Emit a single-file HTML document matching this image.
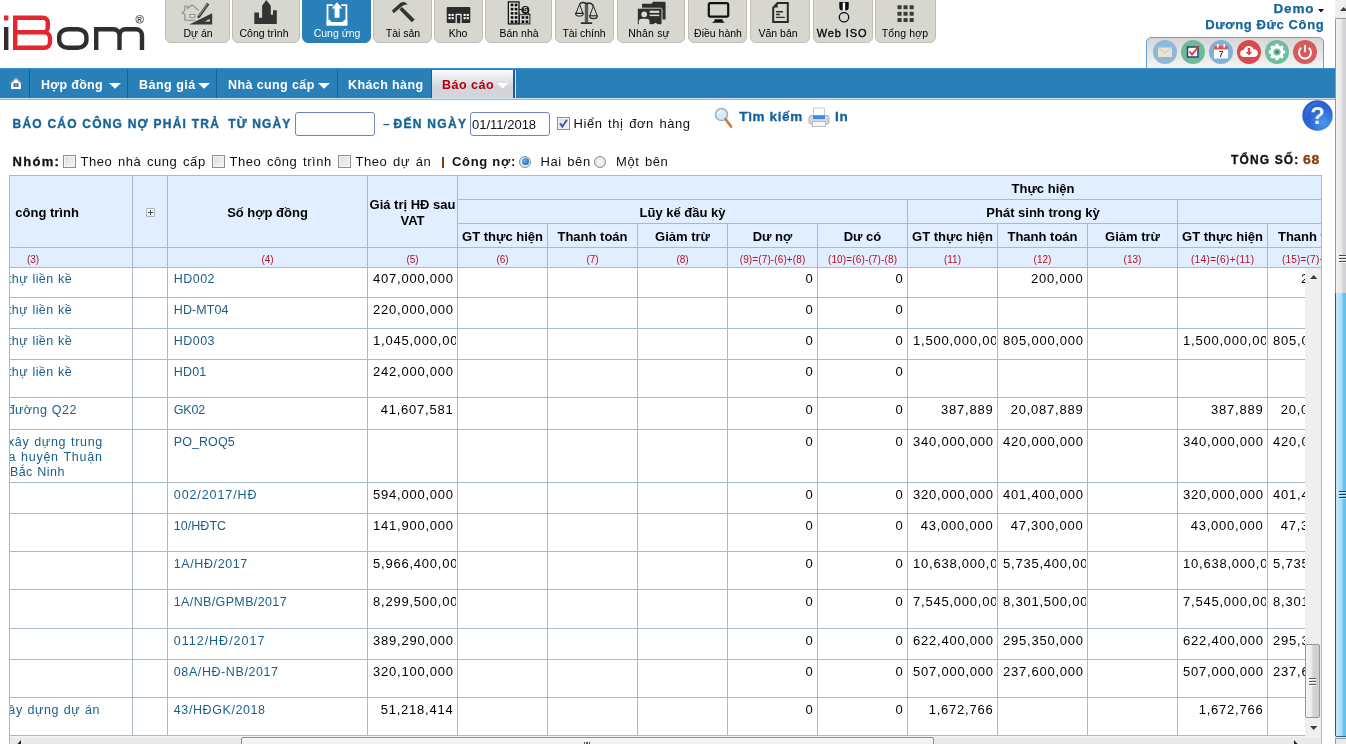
<!DOCTYPE html><html><head><meta charset="utf-8"><title>iBom</title>
<style>html,body{margin:0;padding:0}body{width:1346px;height:744px;overflow:hidden;position:relative;background:#fff;font-family:"Liberation Sans", sans-serif;}div{box-sizing:border-box}svg{position:absolute;overflow:visible}</style></head><body><div id="w" style="position:absolute;left:0;top:0;width:1346px;height:744px;overflow:hidden;will-change:transform;">
<svg style="left:0;top:0" width="160" height="60" viewBox="0 0 160 60">
<rect x="4" y="15.5" width="4.4" height="5" fill="#e5262e"/>
<rect x="4" y="27" width="4.4" height="23" fill="#2f2f31"/>
<path d="M15.2,47.8 V17.7 H43 a4.8,4.8 0 0 1 4.8,4.8 V27.5 a4.8,4.8 0 0 1 -4.8,4.8 H15.2 M43,32.3 H44.2 a5.8,5.8 0 0 1 5.8,5.8 V42 a5.8,5.8 0 0 1 -5.8,5.8 H13" fill="none" stroke="#e5262e" stroke-width="4.4"/>
<rect x="59.2" y="29.2" width="27.2" height="18.6" rx="8.6" ry="7.6" fill="none" stroke="#2f2f31" stroke-width="4.4"/>
<path d="M96.2,50 V27 M96.2,29.2 H113.5 a6,6 0 0 1 6,6 V50 M119.5,35.2 a6,6 0 0 1 6,-6 H136 a6,6 0 0 1 6,6 V50" fill="none" stroke="#2f2f31" stroke-width="4.4"/>
<circle cx="139.7" cy="19.3" r="3.9" fill="none" stroke="#555" stroke-width="0.9"/>
<text x="139.7" y="21.6" font-family="Liberation Sans, sans-serif" font-size="6.5" font-weight="700" fill="#555" text-anchor="middle">R</text>
</svg>
<div style="position:absolute;left:165px;top:-2px;width:65.4px;height:44.6px;background:#d7d6cf;border:1px solid #bfbdb6;border-radius:0 0 6px 6px;"></div>
<div style="position:absolute;top:28.41px;font-size:10.5px;line-height:10.5px;font-weight:400;color:#000;white-space:nowrap;left:-102.0px;width:600px;text-align:center;">Dự án</div>
<svg style="left:182.5px;top:0px" width="30" height="28" viewBox="0 0 30 28"><path d="M1.8,14.2 L-0.9,12.9 L1.8,10.5 V6.2 H4.7 V8.3 L9.1,4.9 L15.6,10.5 M1.8,14 V20.3 H12.5" fill="none" stroke="#8c8c88" stroke-width="1.1"/><rect x="6.9" y="14.5" width="5" height="2.8" fill="#ecebe6" stroke="#8a8a86" stroke-width="1"/><path d="M25.2,3.6 L15.6,17" stroke="#3a3a38" stroke-width="2.8"/><path d="M24.3,4.2 L15.8,16.1" stroke="#e8e6e0" stroke-width="0.6"/><path d="M14.6,18.5 L14.8,15.8 L16.9,17.3 Z" fill="#3a3a38"/><path d="M6.2,24.6 H29.2 V13.2 Z" fill="#3a3a38"/><path d="M21.6,21.6 H26.8 V19 Z" fill="#e0deda"/></svg>
<div style="position:absolute;left:232px;top:-2px;width:68.4px;height:44.6px;background:#d7d6cf;border:1px solid #bfbdb6;border-radius:0 0 6px 6px;"></div>
<div style="position:absolute;top:28.41px;font-size:10.5px;line-height:10.5px;font-weight:400;color:#000;white-space:nowrap;left:-36.0px;width:600px;text-align:center;">Công trình</div>
<svg style="left:251.0px;top:0px" width="30" height="28" viewBox="0 0 30 28"><path d="M3.3,24.1 V12.5 H8 V17.8 H11.1 V5.8 L15.3,0 L19.8,5.8 V14.7 H22 V10.3 H25.8 V24.1 Z" fill="#343432"/></svg>
<div style="position:absolute;left:302px;top:-2px;width:69.4px;height:44.6px;background:#2980b9;border:1px solid #2980b9;border-radius:0 0 6px 6px;"></div>
<div style="position:absolute;top:28.41px;font-size:10.5px;line-height:10.5px;font-weight:400;color:#fff;white-space:nowrap;left:37.0px;width:600px;text-align:center;">Cung ứng</div>
<svg style="left:321.5px;top:0px" width="30" height="28" viewBox="0 0 30 28"><path d="M10.8,5.1 H5.5 V24.5 H24.4 V5.1 H19.2" fill="none" stroke="#fff" stroke-width="1.8"/><path d="M4.6,25.6 H25.3 V19.7 H22.6 L20.4,22.1 H9.6 L7.4,19.7 H4.6 Z" fill="#fff"/><path d="M15,2.2 L20.4,8.6 H17.5 V17.8 H12.6 V8.6 H9.7 Z" fill="#fff"/></svg>
<div style="position:absolute;left:373px;top:-2px;width:59.4px;height:44.6px;background:#d7d6cf;border:1px solid #bfbdb6;border-radius:0 0 6px 6px;"></div>
<div style="position:absolute;top:28.41px;font-size:10.5px;line-height:10.5px;font-weight:400;color:#000;white-space:nowrap;left:103.0px;width:600px;text-align:center;">Tài sản</div>
<svg style="left:387.5px;top:0px" width="30" height="28" viewBox="0 0 30 28"><path d="M11.4,9.4 L14,7.1 L26.7,19.6 L23.8,22.3 Z" fill="#343432"/><path d="M3.8,10.7 L5.6,8.9 L12.2,3.1 Q14,1.8 15.8,2 Q18,2.4 19.6,4.5 Q17.5,4.3 16.2,4.9 Q14.8,5.5 14,6.3 L7.8,11.6 L6,13.2 Z" fill="#343432"/></svg>
<div style="position:absolute;left:434px;top:-2px;width:49.4px;height:44.6px;background:#d7d6cf;border:1px solid #bfbdb6;border-radius:0 0 6px 6px;"></div>
<div style="position:absolute;top:28.41px;font-size:10.5px;line-height:10.5px;font-weight:400;color:#000;white-space:nowrap;left:158.0px;width:600px;text-align:center;">Kho</div>
<svg style="left:443.5px;top:0px" width="30" height="28" viewBox="0 0 30 28"><rect x="2.7" y="6.9" width="23.6" height="16.1" rx="1" fill="#2c2c2a"/><rect x="4.5" y="13.9" width="2.1" height="2.1" fill="#fff"/><rect x="4.5" y="17.1" width="2.1" height="2.1" fill="#fff"/><rect x="7.6" y="13.9" width="2.1" height="2.1" fill="#fff"/><rect x="7.6" y="17.1" width="2.1" height="2.1" fill="#fff"/><rect x="19.6" y="13.9" width="2.1" height="2.1" fill="#fff"/><rect x="19.6" y="17.1" width="2.1" height="2.1" fill="#fff"/><rect x="22.7" y="13.9" width="2.1" height="2.1" fill="#fff"/><rect x="22.7" y="17.1" width="2.1" height="2.1" fill="#fff"/><rect x="11.6" y="13.8" width="6" height="9.4" fill="#f4f4f0"/><rect x="12.8" y="15.1" width="3.6" height="8.1" fill="#2c2c2a"/></svg>
<div style="position:absolute;left:485px;top:-2px;width:67.4px;height:44.6px;background:#d7d6cf;border:1px solid #bfbdb6;border-radius:0 0 6px 6px;"></div>
<div style="position:absolute;top:28.41px;font-size:10.5px;line-height:10.5px;font-weight:400;color:#000;white-space:nowrap;left:219.0px;width:600px;text-align:center;">Bán nhà</div>
<svg style="left:503.5px;top:0px" width="30" height="28" viewBox="0 0 30 28"><rect x="4.4" y="1.9" width="10.6" height="22" fill="#e4e3de" stroke="#111" stroke-width="1.3"/><rect x="6.7" y="3.6" width="2.7" height="2.7" fill="#111"/><rect x="6.7" y="7.8" width="2.7" height="2.7" fill="#111"/><rect x="6.7" y="12" width="2.7" height="2.7" fill="#111"/><rect x="6.7" y="16.1" width="2.7" height="2.7" fill="#111"/><rect x="6.7" y="20.3" width="2.7" height="2.7" fill="#111"/><rect x="10.7" y="3.6" width="2.7" height="2.7" fill="#111"/><rect x="10.7" y="7.8" width="2.7" height="2.7" fill="#111"/><rect x="10.7" y="12" width="2.7" height="2.7" fill="#111"/><rect x="10.7" y="16.1" width="2.7" height="2.7" fill="#111"/><rect x="10.7" y="20.3" width="2.7" height="2.7" fill="#111"/><rect x="15.6" y="14.7" width="10.3" height="9.2" fill="#e4e3de" stroke="#111" stroke-width="0.9"/><rect x="17.6" y="16.1" width="2.7" height="2.7" fill="#111"/><rect x="17.6" y="20.3" width="2.7" height="2.7" fill="#111"/><rect x="21.6" y="16.1" width="2.7" height="2.7" fill="#111"/><rect x="21.6" y="20.3" width="2.7" height="2.7" fill="#111"/><path d="M15,9.5 H18" stroke="#111" stroke-width="0.9"/><circle cx="21.4" cy="10" r="3.9" fill="#111"/><text x="21.4" y="12.4" font-size="6.6" font-weight="700" text-anchor="middle" fill="#d8d6d0" font-family="Liberation Sans, sans-serif">S</text><path d="M24,13 L26.3,14.7" stroke="#111" stroke-width="1"/></svg>
<div style="position:absolute;left:555px;top:-2px;width:59.4px;height:44.6px;background:#d7d6cf;border:1px solid #bfbdb6;border-radius:0 0 6px 6px;"></div>
<div style="position:absolute;top:28.41px;font-size:10.5px;line-height:10.5px;font-weight:400;color:#000;white-space:nowrap;left:284.0px;width:600px;text-align:center;">Tài chính</div>
<svg style="left:569.5px;top:0px" width="30" height="28" viewBox="0 0 30 28"><rect x="14.8" y="3.1" width="3.4" height="19.3" fill="#5a5a58"/><rect x="10.7" y="22.2" width="11.6" height="1.8" rx="0.8" fill="#2a2a28"/><path d="M9.6,4.2 Q12,1.2 16.4,3.6 Q20.5,1.8 23.4,5.8" fill="none" stroke="#222" stroke-width="1.5"/><path d="M5.9,13.4 L9.6,4.2 L12.9,13.4 M19.8,15.8 L23.4,5.8 L27.2,15.8" fill="none" stroke="#222" stroke-width="1"/><path d="M5.6,13.4 H13.2 A3.8,2.6 0 0 1 5.6,13.4 Z" fill="#e6e5e0" stroke="#222" stroke-width="1.1"/><path d="M19.6,15.8 H27.4 A3.9,3 0 0 1 19.6,15.8 Z" fill="#b8b8b4" stroke="#222" stroke-width="1.1"/></svg>
<div style="position:absolute;left:617px;top:-2px;width:68.4px;height:44.6px;background:#d7d6cf;border:1px solid #bfbdb6;border-radius:0 0 6px 6px;"></div>
<div style="position:absolute;top:28.41px;font-size:10.5px;line-height:10.5px;font-weight:400;color:#000;white-space:nowrap;letter-spacing:0.2px;left:349.0px;width:600px;text-align:center;">Nhân sự</div>
<svg style="left:636.0px;top:0px" width="30" height="28" viewBox="0 0 30 28"><path d="M6,19.6 V4.6 a0.8,0.8 0 0 1 0.8,-0.8 H15.8 L17,1.8 H28.4 a1.2,1.2 0 0 1 1.2,1.2 V19.6 Z" fill="#2e2e2c"/><rect x="1.3" y="8.2" width="24.7" height="16.5" rx="1.4" fill="#2e2e2c" stroke="#dedcd6" stroke-width="0.9"/><circle cx="8.2" cy="14.3" r="2.9" fill="#dcdad4"/><path d="M2.8,25.2 V21.2 Q2.8,18.7 6,18.7 H10.5 Q13.5,18.7 13.5,21.2 V25.2 Z" fill="#dcdad4"/><rect x="13.6" y="10.7" width="9.6" height="2.2" fill="#dcdad4"/><rect x="13.6" y="14.6" width="9.6" height="1.5" fill="#dcdad4"/><path d="M17.8,25.3 V23.8 L19.5,22.8 L21.2,23.8 V25.3 Z" fill="#d9d7d0"/></svg>
<div style="position:absolute;left:688px;top:-2px;width:59.4px;height:44.6px;background:#d7d6cf;border:1px solid #bfbdb6;border-radius:0 0 6px 6px;"></div>
<div style="position:absolute;top:28.41px;font-size:10.5px;line-height:10.5px;font-weight:400;color:#000;white-space:nowrap;left:418.0px;width:600px;text-align:center;">Điều hành</div>
<svg style="left:702.5px;top:0px" width="30" height="28" viewBox="0 0 30 28"><rect x="5.8" y="3.1" width="19.4" height="13.6" rx="1.6" fill="none" stroke="#111" stroke-width="2.2"/><path d="M11.8,19.2 H19.4 L20,21.2 L22.1,22.7 H8.7 L11.2,21.2 Z" fill="#111"/></svg>
<div style="position:absolute;left:750px;top:-2px;width:60.4px;height:44.6px;background:#d7d6cf;border:1px solid #bfbdb6;border-radius:0 0 6px 6px;"></div>
<div style="position:absolute;top:28.41px;font-size:10.5px;line-height:10.5px;font-weight:400;color:#000;white-space:nowrap;left:478.0px;width:600px;text-align:center;">Văn bản</div>
<svg style="left:765.0px;top:0px" width="30" height="28" viewBox="0 0 30 28"><path d="M8.2,7.6 L12.6,3 H22.8 V22 H8.2 Z" fill="none" stroke="#2a2a28" stroke-width="2"/><path d="M8.2,7.6 H12.6 V3 Z" fill="#2a2a28"/><path d="M11.1,11.8 H18 M11.1,14.5 H14.9 M11.1,17.4 H19.8" stroke="#2a2a28" stroke-width="1.4"/></svg>
<div style="position:absolute;left:813px;top:-2px;width:60.4px;height:44.6px;background:#d7d6cf;border:1px solid #bfbdb6;border-radius:0 0 6px 6px;"></div>
<div style="position:absolute;top:27.99px;font-size:11px;line-height:11px;font-weight:400;color:#000;white-space:nowrap;letter-spacing:0.9px;left:542.0px;width:600px;text-align:center;-webkit-text-stroke:0.35px #111;">Web ISO</div>
<svg style="left:828.0px;top:0px" width="30" height="28" viewBox="0 0 30 28"><path d="M11.3,2 H20.7 V7.2 Q20.7,10.4 17.6,10.4 H14.4 Q11.3,10.4 11.3,7.2 Z" fill="#0c0c0c"/><rect x="14.7" y="2.6" width="2.4" height="7.8" fill="#fff"/><rect x="13.6" y="2.6" width="1.1" height="6" fill="#1a4a7a" opacity="0.8"/><rect x="17.1" y="2.6" width="1.1" height="6" fill="#6a1a1a" opacity="0.8"/><rect x="14.4" y="10.4" width="3.2" height="2" fill="#f0efea"/><circle cx="16" cy="17.2" r="4.7" fill="none" stroke="#111" stroke-width="1.3"/></svg>
<div style="position:absolute;left:875px;top:-2px;width:61.4px;height:44.6px;background:#d7d6cf;border:1px solid #bfbdb6;border-radius:0 0 6px 6px;"></div>
<div style="position:absolute;top:28.41px;font-size:10.5px;line-height:10.5px;font-weight:400;color:#000;white-space:nowrap;letter-spacing:0.15px;left:605.0px;width:600px;text-align:center;">Tổng hợp</div>
<svg style="left:890.5px;top:0px" width="30" height="28" viewBox="0 0 30 28"><rect x="6.5" y="5.3" width="4.1" height="3.9" fill="#3a3a38"/><rect x="6.5" y="11.8" width="4.1" height="3.9" fill="#3a3a38"/><rect x="6.5" y="18.1" width="4.1" height="3.9" fill="#3a3a38"/><rect x="12.5" y="5.3" width="4.1" height="3.9" fill="#3a3a38"/><rect x="12.5" y="11.8" width="4.1" height="3.9" fill="#3a3a38"/><rect x="12.5" y="18.1" width="4.1" height="3.9" fill="#3a3a38"/><rect x="18.6" y="5.3" width="4.1" height="3.9" fill="#3a3a38"/><rect x="18.6" y="11.8" width="4.1" height="3.9" fill="#3a3a38"/><rect x="18.6" y="18.1" width="4.1" height="3.9" fill="#3a3a38"/></svg>
<div style="position:absolute;top:1.87px;font-size:13.5px;line-height:13.5px;font-weight:700;color:#17659a;white-space:nowrap;letter-spacing:0.9px;right:31.5px;text-align:right;-webkit-text-stroke:0.25px #17659a;">Demo</div>
<svg style="left:1318px;top:9px" width="6" height="4" viewBox="0 0 6 4"><path d="M0,0 H6 L3,3.5 Z" fill="#0a0a40"/></svg>
<div style="position:absolute;top:18.30px;font-size:13px;line-height:13px;font-weight:700;color:#17659a;white-space:nowrap;letter-spacing:0.62px;right:21.700000000000045px;text-align:right;-webkit-text-stroke:0.25px #17659a;">Dương Đức Công</div>
<div style="position:absolute;left:1146px;top:37px;width:178px;height:34px;border:1px solid #5fa3d6;border-radius:5px 5px 0 0;background:linear-gradient(#d6d6d6,#f6f6f6);"></div>
<svg style="left:1153px;top:40px" width="24" height="24" viewBox="0 0 24 24"><circle cx="12" cy="12" r="12" fill="#8fb8d8"/><rect x="5" y="7.5" width="14" height="9.5" fill="#e8e4d8"/><path d="M5,7.5 L12,13 L19,7.5" fill="none" stroke="#c9c4b4" stroke-width="1"/></svg>
<svg style="left:1181px;top:40px" width="24" height="24" viewBox="0 0 24 24"><circle cx="12" cy="12" r="12" fill="#6fb99a"/><rect x="6.5" y="7" width="10.5" height="10" fill="#fff" stroke="#3a4a6a" stroke-width="1.6"/><path d="M8.5,11.5 L11,14.5 L18,6" fill="none" stroke="#d43a3a" stroke-width="1.8"/></svg>
<svg style="left:1209px;top:40px" width="24" height="24" viewBox="0 0 24 24"><circle cx="12" cy="12" r="12" fill="#7fb2da"/><rect x="5" y="6" width="14" height="12.5" fill="#fff"/><rect x="5" y="6" width="14" height="3.5" fill="#e05a55"/><text x="12" y="17.3" font-size="8.5" font-weight="700" text-anchor="middle" fill="#3a3a5a" font-family="Liberation Sans, sans-serif">7</text><rect x="8" y="4" width="1.5" height="3.5" fill="#fff"/><rect x="14.5" y="4" width="1.5" height="3.5" fill="#fff"/></svg>
<svg style="left:1237px;top:40px" width="24" height="24" viewBox="0 0 24 24"><circle cx="12" cy="12" r="12" fill="#d9484c"/><path d="M6.5,17 a3.5,3.5 0 0 1 0.3,-7 a5,5 0 0 1 9.6,-0.8 a3.9,3.9 0 0 1 1,7.8 Z" fill="#fff"/><path d="M10.8,8 h2.4 v4 h2.2 l-3.4,3.6 l-3.4,-3.6 h2.2 Z" fill="#d9484c"/></svg>
<svg style="left:1265px;top:40px" width="24" height="24" viewBox="0 0 24 24"><circle cx="12" cy="12" r="12" fill="#6fbd9f"/><circle cx="12" cy="12" r="5.2" fill="none" stroke="#fff" stroke-width="3.2"/><g stroke="#fff" stroke-width="3"><path d="M12,3.8 V6.5 M12,17.5 V20.2 M3.8,12 H6.5 M17.5,12 H20.2 M6.2,6.2 L8.1,8.1 M15.9,15.9 L17.8,17.8 M6.2,17.8 L8.1,15.9 M15.9,8.1 L17.8,6.2"/></g><circle cx="12" cy="12" r="1.6" fill="#3c7a66"/></svg>
<svg style="left:1293px;top:40px" width="24" height="24" viewBox="0 0 24 24"><circle cx="12" cy="12" r="12" fill="#d65a5e"/><path d="M8.3,7.8 a6,6 0 1 0 7.4,0" fill="none" stroke="#fff" stroke-width="1.9"/><path d="M12,5 V12.2" stroke="#fff" stroke-width="2.1"/></svg>
<div style="position:absolute;left:0px;top:68px;width:1335px;height:30px;background:#2980b9;border-top:1px solid #3a8fd0;"></div>
<div style="position:absolute;left:0px;top:98px;width:1335px;height:1px;background:#cfe0ee;"></div>
<div style="position:absolute;left:0px;top:99px;width:1335px;height:1px;background:#b0b0b0;"></div>
<div style="position:absolute;left:29px;top:69px;width:1px;height:29px;background:#1c5f95;"></div>
<div style="position:absolute;left:127px;top:69px;width:1px;height:29px;background:#1c5f95;"></div>
<div style="position:absolute;left:216px;top:69px;width:1px;height:29px;background:#1c5f95;"></div>
<div style="position:absolute;left:337px;top:69px;width:1px;height:29px;background:#1c5f95;"></div>
<svg style="left:8px;top:75px" width="16" height="16" viewBox="0 0 16 16">
<path d="M8,1.5 L1.5,8.2 L2.8,9.2 L8,3.8 L13.2,9.2 L14.5,8.2 Z" fill="#8a8f98"/>
<path d="M8,3.8 L3,9 V14 H13 V9 Z" fill="#fff"/>
<rect x="5.5" y="8.2" width="5" height="3.6" fill="#2a62c8"/><rect x="7" y="9" width="2" height="1.6" fill="#7ab4ff"/>
</svg>
<div style="position:absolute;top:78.72px;font-size:12.5px;line-height:12.5px;font-weight:700;color:#fff;white-space:nowrap;letter-spacing:0.3px;left:41px;">Hợp đồng</div>
<svg style="left:109.3px;top:83.3px" width="12" height="6" viewBox="0 0 12 6"><path d="M0,0 H12 L6,5.8 Z" fill="#fff"/></svg>
<div style="position:absolute;top:78.72px;font-size:12.5px;line-height:12.5px;font-weight:700;color:#fff;white-space:nowrap;letter-spacing:0.5px;left:139px;">Bảng giá</div>
<svg style="left:198.4px;top:83.3px" width="12" height="6" viewBox="0 0 12 6"><path d="M0,0 H12 L6,5.8 Z" fill="#fff"/></svg>
<div style="position:absolute;top:78.72px;font-size:12.5px;line-height:12.5px;font-weight:700;color:#fff;white-space:nowrap;letter-spacing:0.4px;left:228px;">Nhà cung cấp</div>
<svg style="left:318px;top:83.3px" width="12" height="6" viewBox="0 0 12 6"><path d="M0,0 H12 L6,5.8 Z" fill="#fff"/></svg>
<div style="position:absolute;top:78.72px;font-size:12.5px;line-height:12.5px;font-weight:700;color:#fff;white-space:nowrap;letter-spacing:0.4px;left:348px;">Khách hàng</div>
<div style="position:absolute;left:430.5px;top:70px;width:1.5px;height:28px;background:#1c5f95;"></div>
<div style="position:absolute;left:432px;top:70px;width:81px;height:28px;background:linear-gradient(#ffffff,#e4e5ea 35%,#d3d5db 60%,#d3d5db);"></div>
<div style="position:absolute;left:513px;top:70px;width:1.6px;height:28px;background:#1c5f95;"></div>
<div style="position:absolute;left:515px;top:70px;width:1px;height:28px;background:#d4e6f5;"></div>
<div style="position:absolute;top:78.72px;font-size:12.5px;line-height:12.5px;font-weight:700;color:#b4000e;white-space:nowrap;letter-spacing:0.5px;left:442px;">Báo cáo</div>
<svg style="left:496.5px;top:83.3px" width="11.4" height="6" viewBox="0 0 11.4 6"><path d="M0,0 H11.4 L5.7,5.6 Z" fill="#fff"/></svg>
<div style="position:absolute;top:118.14px;font-size:12px;line-height:12px;font-weight:700;color:#14649a;white-space:nowrap;letter-spacing:1.22px;left:12.5px;-webkit-text-stroke:0.35px #14649a;">BÁO CÁO CÔNG NỢ PHẢI TRẢ</div>
<div style="position:absolute;top:118.14px;font-size:12px;line-height:12px;font-weight:700;color:#14649a;white-space:nowrap;letter-spacing:1.1px;left:228.3px;-webkit-text-stroke:0.35px #14649a;">TỪ NGÀY</div>
<div style="position:absolute;left:295px;top:112px;width:80px;height:24px;border:1px solid #6b87b5;border-radius:3px;background:#fff;"></div>
<div style="position:absolute;top:118.14px;font-size:12px;line-height:12px;font-weight:700;color:#14649a;white-space:nowrap;left:383px;">–</div>
<div style="position:absolute;top:118.14px;font-size:12px;line-height:12px;font-weight:700;color:#14649a;white-space:nowrap;letter-spacing:1.3px;left:393.5px;-webkit-text-stroke:0.35px #14649a;">ĐẾN NGÀY</div>
<div style="position:absolute;left:470px;top:112px;width:80px;height:24px;border:1px solid #6b87b5;border-radius:3px;background:#fff;"></div>
<div style="position:absolute;top:118.30px;font-size:13px;line-height:13px;font-weight:400;color:#111;white-space:nowrap;left:472px;">01/11/2018</div>
<div style="position:absolute;left:557px;top:117px;width:13px;height:13px;border:1px solid #8e8f8f;background:linear-gradient(135deg,#dcdcdc,#f6f6f6);box-shadow:inset 0 0 0 1px #f4f4f4;"></div>
<svg style="left:557px;top:117px" width="13" height="13" viewBox="0 0 13 13"><path d="M3,6.2 L5.3,9.6 L10,2.8" fill="none" stroke="#3a5aa8" stroke-width="1.9"/></svg>
<div style="position:absolute;top:117.30px;font-size:13px;line-height:13px;font-weight:400;color:#111;white-space:nowrap;letter-spacing:0.55px;word-spacing:1.5px;left:573.5px;">Hiển thị đơn hàng</div>
<svg style="left:714px;top:107px" width="20" height="22" viewBox="0 0 20 22">
<circle cx="7.5" cy="7.5" r="6" fill="#d8ecf8" stroke="#9ab0c4" stroke-width="1.6"/>
<path d="M11.5,12 L17,19.5" stroke="#c8804a" stroke-width="2.8" stroke-linecap="round"/>
<path d="M4.2,6.5 a3.6,3.6 0 0 1 3,-2.8" stroke="#fff" stroke-width="1.3" fill="none"/>
</svg>
<div style="position:absolute;top:109.87px;font-size:13.5px;line-height:13.5px;font-weight:700;color:#12609a;white-space:nowrap;letter-spacing:0.62px;left:739.3px;-webkit-text-stroke:0.3px #12609a;">Tìm kiếm</div>
<svg style="left:808px;top:107px" width="22" height="21" viewBox="0 0 22 21">
<rect x="5.5" y="1" width="11" height="9" fill="#fafcff" stroke="#b8c0cc" stroke-width="0.8"/>
<rect x="1" y="8.5" width="20" height="8.5" rx="2" fill="#d4d8de" stroke="#9aa0aa" stroke-width="0.8"/>
<rect x="5" y="8.5" width="12" height="3.5" fill="#3a8ee0"/>
<rect x="4.5" y="14.5" width="13" height="5" fill="#f4f6fa" stroke="#a8aeb8" stroke-width="0.8"/>
</svg>
<div style="position:absolute;top:109.87px;font-size:13.5px;line-height:13.5px;font-weight:700;color:#12609a;white-space:nowrap;letter-spacing:0.8px;left:835px;-webkit-text-stroke:0.3px #12609a;">In</div>
<svg style="left:1302px;top:100px" width="31" height="31" viewBox="0 0 31 31">
<defs><radialGradient id="hg" cx="0.7" cy="0.75" r="0.8"><stop offset="0" stop-color="#4a96ee"/><stop offset="0.6" stop-color="#2c66d4"/><stop offset="1" stop-color="#2a5cc8"/></radialGradient></defs>
<circle cx="15.5" cy="15.5" r="15.2" fill="url(#hg)"/>
<path d="M3,18 A14,14 0 0 1 20,2.2 A22,22 0 0 0 3,18 Z" fill="#3a78e0" opacity="0.6"/>
<text x="15.5" y="24" font-family="Liberation Sans, sans-serif" font-size="24" font-weight="700" fill="#eef2fb" text-anchor="middle">?</text>
</svg>
<div style="position:absolute;top:155.30px;font-size:13px;line-height:13px;font-weight:700;color:#111;white-space:nowrap;letter-spacing:1.3px;left:12.5px;-webkit-text-stroke:0.3px #111;">Nhóm:</div>
<div style="position:absolute;left:63px;top:155px;width:13px;height:13px;border:1px solid #8e8f8f;background:linear-gradient(135deg,#dcdcdc,#f6f6f6);box-shadow:inset 0 0 0 1px #f4f4f4;"></div>
<div style="position:absolute;top:155.30px;font-size:13px;line-height:13px;font-weight:400;color:#111;white-space:nowrap;letter-spacing:0.55px;word-spacing:1.5px;left:80.5px;">Theo nhà cung cấp</div>
<div style="position:absolute;left:212px;top:155px;width:13px;height:13px;border:1px solid #8e8f8f;background:linear-gradient(135deg,#dcdcdc,#f6f6f6);box-shadow:inset 0 0 0 1px #f4f4f4;"></div>
<div style="position:absolute;top:155.30px;font-size:13px;line-height:13px;font-weight:400;color:#111;white-space:nowrap;letter-spacing:0.55px;word-spacing:1.5px;left:229.5px;">Theo công trình</div>
<div style="position:absolute;left:338px;top:155px;width:13px;height:13px;border:1px solid #8e8f8f;background:linear-gradient(135deg,#dcdcdc,#f6f6f6);box-shadow:inset 0 0 0 1px #f4f4f4;"></div>
<div style="position:absolute;top:155.30px;font-size:13px;line-height:13px;font-weight:400;color:#111;white-space:nowrap;letter-spacing:0.55px;word-spacing:1.5px;left:355.5px;">Theo dự án</div>
<div style="position:absolute;left:441.5px;top:156.5px;width:2.5px;height:11px;background:#8b3d10;"></div>
<div style="position:absolute;top:155.30px;font-size:13px;line-height:13px;font-weight:700;color:#111;white-space:nowrap;letter-spacing:0.7px;left:452px;">Công nợ:</div>
<div style="position:absolute;left:519px;top:155.5px;width:12px;height:12px;border:1px solid #8e8f8f;border-radius:50%;background:radial-gradient(#fafafa,#d8d8d8);"></div>
<div style="position:absolute;left:521.5px;top:158.0px;width:7px;height:7px;border-radius:50%;background:radial-gradient(circle at 35% 35%,#6ab4e8,#1a5a9a);"></div>
<div style="position:absolute;top:155.30px;font-size:13px;line-height:13px;font-weight:400;color:#111;white-space:nowrap;letter-spacing:0.55px;word-spacing:1.5px;left:540.5px;">Hai bên</div>
<div style="position:absolute;left:594px;top:155.5px;width:12px;height:12px;border:1px solid #8e8f8f;border-radius:50%;background:radial-gradient(#fafafa,#d8d8d8);"></div>
<div style="position:absolute;top:155.30px;font-size:13px;line-height:13px;font-weight:400;color:#111;white-space:nowrap;letter-spacing:0.55px;word-spacing:1.5px;left:616px;">Một bên</div>
<div style="position:absolute;top:154.14px;font-size:12px;line-height:12px;font-weight:700;color:#111;white-space:nowrap;letter-spacing:1.15px;right:46.5px;text-align:right;-webkit-text-stroke:0.3px #111;">TỔNG SỐ:</div>
<div style="position:absolute;top:154.14px;font-size:12px;line-height:12px;font-weight:700;color:#8b3d10;white-space:nowrap;letter-spacing:0.6px;left:1303.3px;transform:scaleX(1.17);transform-origin:left;-webkit-text-stroke:0.3px #8b3d10;">68</div>
<div style="position:absolute;left:10px;top:176px;width:1311px;height:92px;background:#e0eeff;"></div>
<div style="position:absolute;left:9px;top:175px;width:1313px;height:1px;background:#a9b9c9;"></div>
<div style="position:absolute;left:9px;top:175px;width:1px;height:569px;background:#a9b9c9;"></div>
<div style="position:absolute;left:1321px;top:175px;width:1px;height:569px;background:#a9b9c9;"></div>
<div style="position:absolute;left:457px;top:199px;width:864px;height:1px;background:#a9b9c9;"></div>
<div style="position:absolute;left:457px;top:223px;width:864px;height:1px;background:#a9b9c9;"></div>
<div style="position:absolute;left:10px;top:247px;width:1311px;height:1px;background:#a9b9c9;"></div>
<div style="position:absolute;left:10px;top:267px;width:1311px;height:1px;background:#a9b9c9;"></div>
<div style="position:absolute;left:132px;top:176px;width:1px;height:92px;background:#a9b9c9;"></div>
<div style="position:absolute;left:167px;top:176px;width:1px;height:92px;background:#a9b9c9;"></div>
<div style="position:absolute;left:367px;top:176px;width:1px;height:92px;background:#a9b9c9;"></div>
<div style="position:absolute;left:457px;top:176px;width:1px;height:92px;background:#a9b9c9;"></div>
<div style="position:absolute;left:547px;top:224px;width:1px;height:44px;background:#a9b9c9;"></div>
<div style="position:absolute;left:637px;top:224px;width:1px;height:44px;background:#a9b9c9;"></div>
<div style="position:absolute;left:727px;top:224px;width:1px;height:44px;background:#a9b9c9;"></div>
<div style="position:absolute;left:817px;top:224px;width:1px;height:44px;background:#a9b9c9;"></div>
<div style="position:absolute;left:997px;top:224px;width:1px;height:44px;background:#a9b9c9;"></div>
<div style="position:absolute;left:1087px;top:224px;width:1px;height:44px;background:#a9b9c9;"></div>
<div style="position:absolute;left:1267px;top:224px;width:1px;height:44px;background:#a9b9c9;"></div>
<div style="position:absolute;left:907px;top:200px;width:1px;height:68px;background:#a9b9c9;"></div>
<div style="position:absolute;left:1177px;top:200px;width:1px;height:68px;background:#a9b9c9;"></div>
<div style="position:absolute;top:206.30px;font-size:13px;line-height:13px;font-weight:700;color:#000;white-space:nowrap;left:15.3px;">công trình</div>
<div style="position:absolute;left:146px;top:208px;width:9px;height:9px;border:1px solid #a8b4c0;background:#f4f7fa;border-radius:1px;"></div>
<div style="position:absolute;left:148px;top:212px;width:5px;height:1px;background:#444;"></div>
<div style="position:absolute;left:150px;top:210px;width:1px;height:5px;background:#444;"></div>
<div style="position:absolute;top:206.30px;font-size:13px;line-height:13px;font-weight:700;color:#000;white-space:nowrap;left:-32.5px;width:600px;text-align:center;">Số hợp đồng</div>
<div style="position:absolute;top:198.30px;font-size:13px;line-height:13px;font-weight:700;color:#000;white-space:nowrap;left:112.5px;width:600px;text-align:center;">Giá trị HĐ sau</div>
<div style="position:absolute;top:214.30px;font-size:13px;line-height:13px;font-weight:700;color:#000;white-space:nowrap;left:112.5px;width:600px;text-align:center;">VAT</div>
<div style="position:absolute;top:182.30px;font-size:13px;line-height:13px;font-weight:700;color:#000;white-space:nowrap;left:743px;width:600px;text-align:center;">Thực hiện</div>
<div style="position:absolute;top:206.30px;font-size:13px;line-height:13px;font-weight:700;color:#000;white-space:nowrap;left:382.5px;width:600px;text-align:center;">Lũy kế đầu kỳ</div>
<div style="position:absolute;top:206.30px;font-size:13px;line-height:13px;font-weight:700;color:#000;white-space:nowrap;left:743px;width:600px;text-align:center;">Phát sinh trong kỳ</div>
<div style="position:absolute;top:230.30px;font-size:13px;line-height:13px;font-weight:700;color:#000;white-space:nowrap;left:202.5px;width:600px;text-align:center;">GT thực hiện</div>
<div style="position:absolute;top:230.30px;font-size:13px;line-height:13px;font-weight:700;color:#000;white-space:nowrap;left:292.5px;width:600px;text-align:center;">Thanh toán</div>
<div style="position:absolute;top:230.30px;font-size:13px;line-height:13px;font-weight:700;color:#000;white-space:nowrap;left:382.5px;width:600px;text-align:center;">Giảm trừ</div>
<div style="position:absolute;top:230.30px;font-size:13px;line-height:13px;font-weight:700;color:#000;white-space:nowrap;left:472.5px;width:600px;text-align:center;">Dư nợ</div>
<div style="position:absolute;top:230.30px;font-size:13px;line-height:13px;font-weight:700;color:#000;white-space:nowrap;left:562.5px;width:600px;text-align:center;">Dư có</div>
<div style="position:absolute;top:230.30px;font-size:13px;line-height:13px;font-weight:700;color:#000;white-space:nowrap;left:652.5px;width:600px;text-align:center;">GT thực hiện</div>
<div style="position:absolute;top:230.30px;font-size:13px;line-height:13px;font-weight:700;color:#000;white-space:nowrap;left:742.5px;width:600px;text-align:center;">Thanh toán</div>
<div style="position:absolute;top:230.30px;font-size:13px;line-height:13px;font-weight:700;color:#000;white-space:nowrap;left:832.5px;width:600px;text-align:center;">Giảm trừ</div>
<div style="position:absolute;top:230.30px;font-size:13px;line-height:13px;font-weight:700;color:#000;white-space:nowrap;left:922.5px;width:600px;text-align:center;">GT thực hiện</div>
<div style="position:absolute;left:1268px;top:224px;width:53px;height:23px;overflow:hidden;">
<div style="position:absolute;left:0;top:6.00px;width:90px;text-align:center;font-size:13px;line-height:13px;font-weight:700;white-space:nowrap;">Thanh toán</div></div>
<div style="position:absolute;top:254.84px;font-size:10px;line-height:10px;font-weight:400;color:#b3121f;white-space:nowrap;left:-267px;width:600px;text-align:center;">(3)</div>
<div style="position:absolute;top:254.84px;font-size:10px;line-height:10px;font-weight:400;color:#b3121f;white-space:nowrap;left:-32.5px;width:600px;text-align:center;">(4)</div>
<div style="position:absolute;top:254.84px;font-size:10px;line-height:10px;font-weight:400;color:#b3121f;white-space:nowrap;left:112.5px;width:600px;text-align:center;">(5)</div>
<div style="position:absolute;top:254.84px;font-size:10px;line-height:10px;font-weight:400;color:#b3121f;white-space:nowrap;left:202.5px;width:600px;text-align:center;">(6)</div>
<div style="position:absolute;top:254.84px;font-size:10px;line-height:10px;font-weight:400;color:#b3121f;white-space:nowrap;left:292.5px;width:600px;text-align:center;">(7)</div>
<div style="position:absolute;top:254.84px;font-size:10px;line-height:10px;font-weight:400;color:#b3121f;white-space:nowrap;left:382.5px;width:600px;text-align:center;">(8)</div>
<div style="position:absolute;top:254.84px;font-size:10px;line-height:10px;font-weight:400;color:#b3121f;white-space:nowrap;letter-spacing:0.113px;left:472.5565px;width:600px;text-align:center;">(9)=(7)-(6)+(8)</div>
<div style="position:absolute;top:254.84px;font-size:10px;line-height:10px;font-weight:400;color:#b3121f;white-space:nowrap;letter-spacing:0.143px;left:562.5715px;width:600px;text-align:center;">(10)=(6)-(7)-(8)</div>
<div style="position:absolute;top:254.84px;font-size:10px;line-height:10px;font-weight:400;color:#b3121f;white-space:nowrap;left:652.5px;width:600px;text-align:center;">(11)</div>
<div style="position:absolute;top:254.84px;font-size:10px;line-height:10px;font-weight:400;color:#b3121f;white-space:nowrap;left:742.5px;width:600px;text-align:center;">(12)</div>
<div style="position:absolute;top:254.84px;font-size:10px;line-height:10px;font-weight:400;color:#b3121f;white-space:nowrap;left:832.5px;width:600px;text-align:center;">(13)</div>
<div style="position:absolute;top:254.84px;font-size:10px;line-height:10px;font-weight:400;color:#b3121f;white-space:nowrap;letter-spacing:0.373px;left:922.6865px;width:600px;text-align:center;">(14)=(6)+(11)</div>
<div style="position:absolute;left:1268px;top:248px;width:53px;height:19px;overflow:hidden;">
<div style="position:absolute;left:0;top:6.84px;width:90px;text-align:center;font-size:10px;line-height:10px;color:#b3121f;letter-spacing:0.213px;white-space:nowrap;">(15)=(7)+(12)</div></div>
<div style="position:absolute;left:10px;top:268px;width:1295px;height:468px;background:#fff;"></div>
<div style="position:absolute;left:10px;top:297px;width:1295px;height:1px;background:#a9b9c9;"></div>
<div style="position:absolute;left:10px;top:328px;width:1295px;height:1px;background:#a9b9c9;"></div>
<div style="position:absolute;left:10px;top:359px;width:1295px;height:1px;background:#a9b9c9;"></div>
<div style="position:absolute;left:10px;top:397px;width:1295px;height:1px;background:#a9b9c9;"></div>
<div style="position:absolute;left:10px;top:429px;width:1295px;height:1px;background:#a9b9c9;"></div>
<div style="position:absolute;left:10px;top:482px;width:1295px;height:1px;background:#a9b9c9;"></div>
<div style="position:absolute;left:10px;top:513px;width:1295px;height:1px;background:#a9b9c9;"></div>
<div style="position:absolute;left:10px;top:551px;width:1295px;height:1px;background:#a9b9c9;"></div>
<div style="position:absolute;left:10px;top:589px;width:1295px;height:1px;background:#a9b9c9;"></div>
<div style="position:absolute;left:10px;top:628px;width:1295px;height:1px;background:#a9b9c9;"></div>
<div style="position:absolute;left:10px;top:659px;width:1295px;height:1px;background:#a9b9c9;"></div>
<div style="position:absolute;left:10px;top:697px;width:1295px;height:1px;background:#a9b9c9;"></div>
<div style="position:absolute;left:10px;top:735px;width:1295px;height:1px;background:#a9b9c9;"></div>
<div style="position:absolute;left:132px;top:268px;width:1px;height:468px;background:#a9b9c9;"></div>
<div style="position:absolute;left:167px;top:268px;width:1px;height:468px;background:#a9b9c9;"></div>
<div style="position:absolute;left:367px;top:268px;width:1px;height:468px;background:#a9b9c9;"></div>
<div style="position:absolute;left:457px;top:268px;width:1px;height:468px;background:#a9b9c9;"></div>
<div style="position:absolute;left:547px;top:268px;width:1px;height:468px;background:#a9b9c9;"></div>
<div style="position:absolute;left:637px;top:268px;width:1px;height:468px;background:#a9b9c9;"></div>
<div style="position:absolute;left:727px;top:268px;width:1px;height:468px;background:#a9b9c9;"></div>
<div style="position:absolute;left:817px;top:268px;width:1px;height:468px;background:#a9b9c9;"></div>
<div style="position:absolute;left:907px;top:268px;width:1px;height:468px;background:#a9b9c9;"></div>
<div style="position:absolute;left:997px;top:268px;width:1px;height:468px;background:#a9b9c9;"></div>
<div style="position:absolute;left:1087px;top:268px;width:1px;height:468px;background:#a9b9c9;"></div>
<div style="position:absolute;left:1177px;top:268px;width:1px;height:468px;background:#a9b9c9;"></div>
<div style="position:absolute;left:1267px;top:268px;width:1px;height:468px;background:#a9b9c9;"></div>
<div style="position:absolute;left:10px;top:269px;width:122px;height:20px;overflow:hidden;"><div style="position:absolute;right:60.00000000000001px;top:3.72px;font-size:12.5px;line-height:12.5px;letter-spacing:0.4px;word-spacing:0.6px;color:#1a5f8a;white-space:nowrap;">thự liền kề</div></div>
<div style="position:absolute;top:272.72px;font-size:12.5px;line-height:12.5px;font-weight:400;color:#1a5f8a;white-space:nowrap;letter-spacing:0.45px;left:173.8px;">HD002</div>
<div style="position:absolute;left:368px;top:269px;width:88px;height:20px;overflow:hidden;"><div style="position:absolute;left:5px;top:3.30px;min-width:80.5px;text-align:right;font-size:13px;line-height:13px;letter-spacing:0.77px;color:#000;white-space:nowrap;">407,000,000</div></div>
<div style="position:absolute;left:728px;top:269px;width:88px;height:20px;overflow:hidden;"><div style="position:absolute;left:5px;top:3.30px;min-width:80.5px;text-align:right;font-size:13px;line-height:13px;letter-spacing:0.77px;color:#000;white-space:nowrap;">0</div></div>
<div style="position:absolute;left:818px;top:269px;width:88px;height:20px;overflow:hidden;"><div style="position:absolute;left:5px;top:3.30px;min-width:80.5px;text-align:right;font-size:13px;line-height:13px;letter-spacing:0.77px;color:#000;white-space:nowrap;">0</div></div>
<div style="position:absolute;left:998px;top:269px;width:88px;height:20px;overflow:hidden;"><div style="position:absolute;left:5px;top:3.30px;min-width:80.5px;text-align:right;font-size:13px;line-height:13px;letter-spacing:0.77px;color:#000;white-space:nowrap;">200,000</div></div>
<div style="position:absolute;left:1268px;top:269px;width:37px;height:20px;overflow:hidden;"><div style="position:absolute;left:5px;top:3.30px;min-width:80.5px;text-align:right;font-size:13px;line-height:13px;letter-spacing:0.77px;color:#000;white-space:nowrap;">200,000</div></div>
<div style="position:absolute;left:10px;top:300px;width:122px;height:20px;overflow:hidden;"><div style="position:absolute;right:60.00000000000001px;top:3.72px;font-size:12.5px;line-height:12.5px;letter-spacing:0.4px;word-spacing:0.6px;color:#1a5f8a;white-space:nowrap;">thự liền kề</div></div>
<div style="position:absolute;top:303.72px;font-size:12.5px;line-height:12.5px;font-weight:400;color:#1a5f8a;white-space:nowrap;letter-spacing:0.083px;left:173.8px;">HD-MT04</div>
<div style="position:absolute;left:368px;top:300px;width:88px;height:20px;overflow:hidden;"><div style="position:absolute;left:5px;top:3.30px;min-width:80.5px;text-align:right;font-size:13px;line-height:13px;letter-spacing:0.77px;color:#000;white-space:nowrap;">220,000,000</div></div>
<div style="position:absolute;left:728px;top:300px;width:88px;height:20px;overflow:hidden;"><div style="position:absolute;left:5px;top:3.30px;min-width:80.5px;text-align:right;font-size:13px;line-height:13px;letter-spacing:0.77px;color:#000;white-space:nowrap;">0</div></div>
<div style="position:absolute;left:818px;top:300px;width:88px;height:20px;overflow:hidden;"><div style="position:absolute;left:5px;top:3.30px;min-width:80.5px;text-align:right;font-size:13px;line-height:13px;letter-spacing:0.77px;color:#000;white-space:nowrap;">0</div></div>
<div style="position:absolute;left:10px;top:331px;width:122px;height:20px;overflow:hidden;"><div style="position:absolute;right:60.00000000000001px;top:3.72px;font-size:12.5px;line-height:12.5px;letter-spacing:0.4px;word-spacing:0.6px;color:#1a5f8a;white-space:nowrap;">thự liền kề</div></div>
<div style="position:absolute;top:334.72px;font-size:12.5px;line-height:12.5px;font-weight:400;color:#1a5f8a;white-space:nowrap;letter-spacing:0.45px;left:173.8px;">HD003</div>
<div style="position:absolute;left:368px;top:331px;width:88px;height:20px;overflow:hidden;"><div style="position:absolute;left:5px;top:3.30px;min-width:80.5px;text-align:right;font-size:13px;line-height:13px;letter-spacing:0.77px;color:#000;white-space:nowrap;">1,045,000,000</div></div>
<div style="position:absolute;left:728px;top:331px;width:88px;height:20px;overflow:hidden;"><div style="position:absolute;left:5px;top:3.30px;min-width:80.5px;text-align:right;font-size:13px;line-height:13px;letter-spacing:0.77px;color:#000;white-space:nowrap;">0</div></div>
<div style="position:absolute;left:818px;top:331px;width:88px;height:20px;overflow:hidden;"><div style="position:absolute;left:5px;top:3.30px;min-width:80.5px;text-align:right;font-size:13px;line-height:13px;letter-spacing:0.77px;color:#000;white-space:nowrap;">0</div></div>
<div style="position:absolute;left:908px;top:331px;width:88px;height:20px;overflow:hidden;"><div style="position:absolute;left:5px;top:3.30px;min-width:80.5px;text-align:right;font-size:13px;line-height:13px;letter-spacing:0.77px;color:#000;white-space:nowrap;">1,500,000,000</div></div>
<div style="position:absolute;left:998px;top:331px;width:88px;height:20px;overflow:hidden;"><div style="position:absolute;left:5px;top:3.30px;min-width:80.5px;text-align:right;font-size:13px;line-height:13px;letter-spacing:0.77px;color:#000;white-space:nowrap;">805,000,000</div></div>
<div style="position:absolute;left:1178px;top:331px;width:88px;height:20px;overflow:hidden;"><div style="position:absolute;left:5px;top:3.30px;min-width:80.5px;text-align:right;font-size:13px;line-height:13px;letter-spacing:0.77px;color:#000;white-space:nowrap;">1,500,000,000</div></div>
<div style="position:absolute;left:1268px;top:331px;width:37px;height:20px;overflow:hidden;"><div style="position:absolute;left:5px;top:3.30px;min-width:80.5px;text-align:right;font-size:13px;line-height:13px;letter-spacing:0.77px;color:#000;white-space:nowrap;">805,000,000</div></div>
<div style="position:absolute;left:10px;top:362px;width:122px;height:20px;overflow:hidden;"><div style="position:absolute;right:60.00000000000001px;top:3.72px;font-size:12.5px;line-height:12.5px;letter-spacing:0.4px;word-spacing:0.6px;color:#1a5f8a;white-space:nowrap;">thự liền kề</div></div>
<div style="position:absolute;top:365.72px;font-size:12.5px;line-height:12.5px;font-weight:400;color:#1a5f8a;white-space:nowrap;letter-spacing:0.167px;left:173.8px;">HD01</div>
<div style="position:absolute;left:368px;top:362px;width:88px;height:20px;overflow:hidden;"><div style="position:absolute;left:5px;top:3.30px;min-width:80.5px;text-align:right;font-size:13px;line-height:13px;letter-spacing:0.77px;color:#000;white-space:nowrap;">242,000,000</div></div>
<div style="position:absolute;left:728px;top:362px;width:88px;height:20px;overflow:hidden;"><div style="position:absolute;left:5px;top:3.30px;min-width:80.5px;text-align:right;font-size:13px;line-height:13px;letter-spacing:0.77px;color:#000;white-space:nowrap;">0</div></div>
<div style="position:absolute;left:818px;top:362px;width:88px;height:20px;overflow:hidden;"><div style="position:absolute;left:5px;top:3.30px;min-width:80.5px;text-align:right;font-size:13px;line-height:13px;letter-spacing:0.77px;color:#000;white-space:nowrap;">0</div></div>
<div style="position:absolute;left:10px;top:400px;width:122px;height:20px;overflow:hidden;"><div style="position:absolute;right:55.199999999999996px;top:3.72px;font-size:12.5px;line-height:12.5px;letter-spacing:0.45px;word-spacing:0.6px;color:#1a5f8a;white-space:nowrap;">đường Q22</div></div>
<div style="position:absolute;top:403.72px;font-size:12.5px;line-height:12.5px;font-weight:400;color:#1a5f8a;white-space:nowrap;letter-spacing:-0.167px;left:173.8px;">GK02</div>
<div style="position:absolute;left:368px;top:400px;width:88px;height:20px;overflow:hidden;"><div style="position:absolute;left:5px;top:3.30px;min-width:80.5px;text-align:right;font-size:13px;line-height:13px;letter-spacing:0.77px;color:#000;white-space:nowrap;">41,607,581</div></div>
<div style="position:absolute;left:728px;top:400px;width:88px;height:20px;overflow:hidden;"><div style="position:absolute;left:5px;top:3.30px;min-width:80.5px;text-align:right;font-size:13px;line-height:13px;letter-spacing:0.77px;color:#000;white-space:nowrap;">0</div></div>
<div style="position:absolute;left:818px;top:400px;width:88px;height:20px;overflow:hidden;"><div style="position:absolute;left:5px;top:3.30px;min-width:80.5px;text-align:right;font-size:13px;line-height:13px;letter-spacing:0.77px;color:#000;white-space:nowrap;">0</div></div>
<div style="position:absolute;left:908px;top:400px;width:88px;height:20px;overflow:hidden;"><div style="position:absolute;left:5px;top:3.30px;min-width:80.5px;text-align:right;font-size:13px;line-height:13px;letter-spacing:0.77px;color:#000;white-space:nowrap;">387,889</div></div>
<div style="position:absolute;left:998px;top:400px;width:88px;height:20px;overflow:hidden;"><div style="position:absolute;left:5px;top:3.30px;min-width:80.5px;text-align:right;font-size:13px;line-height:13px;letter-spacing:0.77px;color:#000;white-space:nowrap;">20,087,889</div></div>
<div style="position:absolute;left:1178px;top:400px;width:88px;height:20px;overflow:hidden;"><div style="position:absolute;left:5px;top:3.30px;min-width:80.5px;text-align:right;font-size:13px;line-height:13px;letter-spacing:0.77px;color:#000;white-space:nowrap;">387,889</div></div>
<div style="position:absolute;left:1268px;top:400px;width:37px;height:20px;overflow:hidden;"><div style="position:absolute;left:5px;top:3.30px;min-width:80.5px;text-align:right;font-size:13px;line-height:13px;letter-spacing:0.77px;color:#000;white-space:nowrap;">20,087,889</div></div>
<div style="position:absolute;left:10px;top:432px;width:122px;height:20px;overflow:hidden;"><div style="position:absolute;right:29.000000000000007px;top:3.72px;font-size:12.5px;line-height:12.5px;letter-spacing:0.7px;word-spacing:0.6px;color:#1a5f8a;white-space:nowrap;">xây dựng trung</div></div>
<div style="position:absolute;left:10px;top:447px;width:122px;height:20px;overflow:hidden;"><div style="position:absolute;right:29.4px;top:3.72px;font-size:12.5px;line-height:12.5px;letter-spacing:0.75px;word-spacing:0.6px;color:#1a5f8a;white-space:nowrap;">a huyện Thuận</div></div>
<div style="position:absolute;left:10px;top:462px;width:122px;height:20px;overflow:hidden;"><div style="position:absolute;right:67.19999999999999px;top:3.72px;font-size:12.5px;line-height:12.5px;letter-spacing:0.45px;word-spacing:0.6px;color:#1a5f8a;white-space:nowrap;">Bắc Ninh</div></div>
<div style="position:absolute;top:435.72px;font-size:12.5px;line-height:12.5px;font-weight:400;color:#1a5f8a;white-space:nowrap;letter-spacing:0.067px;left:173.8px;">PO_ROQ5</div>
<div style="position:absolute;left:728px;top:432px;width:88px;height:20px;overflow:hidden;"><div style="position:absolute;left:5px;top:3.30px;min-width:80.5px;text-align:right;font-size:13px;line-height:13px;letter-spacing:0.77px;color:#000;white-space:nowrap;">0</div></div>
<div style="position:absolute;left:818px;top:432px;width:88px;height:20px;overflow:hidden;"><div style="position:absolute;left:5px;top:3.30px;min-width:80.5px;text-align:right;font-size:13px;line-height:13px;letter-spacing:0.77px;color:#000;white-space:nowrap;">0</div></div>
<div style="position:absolute;left:908px;top:432px;width:88px;height:20px;overflow:hidden;"><div style="position:absolute;left:5px;top:3.30px;min-width:80.5px;text-align:right;font-size:13px;line-height:13px;letter-spacing:0.77px;color:#000;white-space:nowrap;">340,000,000</div></div>
<div style="position:absolute;left:998px;top:432px;width:88px;height:20px;overflow:hidden;"><div style="position:absolute;left:5px;top:3.30px;min-width:80.5px;text-align:right;font-size:13px;line-height:13px;letter-spacing:0.77px;color:#000;white-space:nowrap;">420,000,000</div></div>
<div style="position:absolute;left:1178px;top:432px;width:88px;height:20px;overflow:hidden;"><div style="position:absolute;left:5px;top:3.30px;min-width:80.5px;text-align:right;font-size:13px;line-height:13px;letter-spacing:0.77px;color:#000;white-space:nowrap;">340,000,000</div></div>
<div style="position:absolute;left:1268px;top:432px;width:37px;height:20px;overflow:hidden;"><div style="position:absolute;left:5px;top:3.30px;min-width:80.5px;text-align:right;font-size:13px;line-height:13px;letter-spacing:0.77px;color:#000;white-space:nowrap;">420,000,000</div></div>
<div style="position:absolute;top:488.72px;font-size:12.5px;line-height:12.5px;font-weight:400;color:#1a5f8a;white-space:nowrap;letter-spacing:0.9px;left:173.8px;">002/2017/HĐ</div>
<div style="position:absolute;left:368px;top:485px;width:88px;height:20px;overflow:hidden;"><div style="position:absolute;left:5px;top:3.30px;min-width:80.5px;text-align:right;font-size:13px;line-height:13px;letter-spacing:0.77px;color:#000;white-space:nowrap;">594,000,000</div></div>
<div style="position:absolute;left:728px;top:485px;width:88px;height:20px;overflow:hidden;"><div style="position:absolute;left:5px;top:3.30px;min-width:80.5px;text-align:right;font-size:13px;line-height:13px;letter-spacing:0.77px;color:#000;white-space:nowrap;">0</div></div>
<div style="position:absolute;left:818px;top:485px;width:88px;height:20px;overflow:hidden;"><div style="position:absolute;left:5px;top:3.30px;min-width:80.5px;text-align:right;font-size:13px;line-height:13px;letter-spacing:0.77px;color:#000;white-space:nowrap;">0</div></div>
<div style="position:absolute;left:908px;top:485px;width:88px;height:20px;overflow:hidden;"><div style="position:absolute;left:5px;top:3.30px;min-width:80.5px;text-align:right;font-size:13px;line-height:13px;letter-spacing:0.77px;color:#000;white-space:nowrap;">320,000,000</div></div>
<div style="position:absolute;left:998px;top:485px;width:88px;height:20px;overflow:hidden;"><div style="position:absolute;left:5px;top:3.30px;min-width:80.5px;text-align:right;font-size:13px;line-height:13px;letter-spacing:0.77px;color:#000;white-space:nowrap;">401,400,000</div></div>
<div style="position:absolute;left:1178px;top:485px;width:88px;height:20px;overflow:hidden;"><div style="position:absolute;left:5px;top:3.30px;min-width:80.5px;text-align:right;font-size:13px;line-height:13px;letter-spacing:0.77px;color:#000;white-space:nowrap;">320,000,000</div></div>
<div style="position:absolute;left:1268px;top:485px;width:37px;height:20px;overflow:hidden;"><div style="position:absolute;left:5px;top:3.30px;min-width:80.5px;text-align:right;font-size:13px;line-height:13px;letter-spacing:0.77px;color:#000;white-space:nowrap;">401,400,000</div></div>
<div style="position:absolute;top:519.72px;font-size:12.5px;line-height:12.5px;font-weight:400;color:#1a5f8a;white-space:nowrap;letter-spacing:0.033px;left:173.8px;">10/HĐTC</div>
<div style="position:absolute;left:368px;top:516px;width:88px;height:20px;overflow:hidden;"><div style="position:absolute;left:5px;top:3.30px;min-width:80.5px;text-align:right;font-size:13px;line-height:13px;letter-spacing:0.77px;color:#000;white-space:nowrap;">141,900,000</div></div>
<div style="position:absolute;left:728px;top:516px;width:88px;height:20px;overflow:hidden;"><div style="position:absolute;left:5px;top:3.30px;min-width:80.5px;text-align:right;font-size:13px;line-height:13px;letter-spacing:0.77px;color:#000;white-space:nowrap;">0</div></div>
<div style="position:absolute;left:818px;top:516px;width:88px;height:20px;overflow:hidden;"><div style="position:absolute;left:5px;top:3.30px;min-width:80.5px;text-align:right;font-size:13px;line-height:13px;letter-spacing:0.77px;color:#000;white-space:nowrap;">0</div></div>
<div style="position:absolute;left:908px;top:516px;width:88px;height:20px;overflow:hidden;"><div style="position:absolute;left:5px;top:3.30px;min-width:80.5px;text-align:right;font-size:13px;line-height:13px;letter-spacing:0.77px;color:#000;white-space:nowrap;">43,000,000</div></div>
<div style="position:absolute;left:998px;top:516px;width:88px;height:20px;overflow:hidden;"><div style="position:absolute;left:5px;top:3.30px;min-width:80.5px;text-align:right;font-size:13px;line-height:13px;letter-spacing:0.77px;color:#000;white-space:nowrap;">47,300,000</div></div>
<div style="position:absolute;left:1178px;top:516px;width:88px;height:20px;overflow:hidden;"><div style="position:absolute;left:5px;top:3.30px;min-width:80.5px;text-align:right;font-size:13px;line-height:13px;letter-spacing:0.77px;color:#000;white-space:nowrap;">43,000,000</div></div>
<div style="position:absolute;left:1268px;top:516px;width:37px;height:20px;overflow:hidden;"><div style="position:absolute;left:5px;top:3.30px;min-width:80.5px;text-align:right;font-size:13px;line-height:13px;letter-spacing:0.77px;color:#000;white-space:nowrap;">47,300,000</div></div>
<div style="position:absolute;top:557.72px;font-size:12.5px;line-height:12.5px;font-weight:400;color:#1a5f8a;white-space:nowrap;letter-spacing:0.6px;left:173.8px;">1A/HĐ/2017</div>
<div style="position:absolute;left:368px;top:554px;width:88px;height:20px;overflow:hidden;"><div style="position:absolute;left:5px;top:3.30px;min-width:80.5px;text-align:right;font-size:13px;line-height:13px;letter-spacing:0.77px;color:#000;white-space:nowrap;">5,966,400,000</div></div>
<div style="position:absolute;left:728px;top:554px;width:88px;height:20px;overflow:hidden;"><div style="position:absolute;left:5px;top:3.30px;min-width:80.5px;text-align:right;font-size:13px;line-height:13px;letter-spacing:0.77px;color:#000;white-space:nowrap;">0</div></div>
<div style="position:absolute;left:818px;top:554px;width:88px;height:20px;overflow:hidden;"><div style="position:absolute;left:5px;top:3.30px;min-width:80.5px;text-align:right;font-size:13px;line-height:13px;letter-spacing:0.77px;color:#000;white-space:nowrap;">0</div></div>
<div style="position:absolute;left:908px;top:554px;width:88px;height:20px;overflow:hidden;"><div style="position:absolute;left:5px;top:3.30px;min-width:80.5px;text-align:right;font-size:13px;line-height:13px;letter-spacing:0.77px;color:#000;white-space:nowrap;">10,638,000,000</div></div>
<div style="position:absolute;left:998px;top:554px;width:88px;height:20px;overflow:hidden;"><div style="position:absolute;left:5px;top:3.30px;min-width:80.5px;text-align:right;font-size:13px;line-height:13px;letter-spacing:0.77px;color:#000;white-space:nowrap;">5,735,400,000</div></div>
<div style="position:absolute;left:1178px;top:554px;width:88px;height:20px;overflow:hidden;"><div style="position:absolute;left:5px;top:3.30px;min-width:80.5px;text-align:right;font-size:13px;line-height:13px;letter-spacing:0.77px;color:#000;white-space:nowrap;">10,638,000,000</div></div>
<div style="position:absolute;left:1268px;top:554px;width:37px;height:20px;overflow:hidden;"><div style="position:absolute;left:5px;top:3.30px;min-width:80.5px;text-align:right;font-size:13px;line-height:13px;letter-spacing:0.77px;color:#000;white-space:nowrap;">5,735,400,000</div></div>
<div style="position:absolute;top:595.72px;font-size:12.5px;line-height:12.5px;font-weight:400;color:#1a5f8a;white-space:nowrap;letter-spacing:0.364px;left:173.8px;">1A/NB/GPMB/2017</div>
<div style="position:absolute;left:368px;top:592px;width:88px;height:20px;overflow:hidden;"><div style="position:absolute;left:5px;top:3.30px;min-width:80.5px;text-align:right;font-size:13px;line-height:13px;letter-spacing:0.77px;color:#000;white-space:nowrap;">8,299,500,000</div></div>
<div style="position:absolute;left:728px;top:592px;width:88px;height:20px;overflow:hidden;"><div style="position:absolute;left:5px;top:3.30px;min-width:80.5px;text-align:right;font-size:13px;line-height:13px;letter-spacing:0.77px;color:#000;white-space:nowrap;">0</div></div>
<div style="position:absolute;left:818px;top:592px;width:88px;height:20px;overflow:hidden;"><div style="position:absolute;left:5px;top:3.30px;min-width:80.5px;text-align:right;font-size:13px;line-height:13px;letter-spacing:0.77px;color:#000;white-space:nowrap;">0</div></div>
<div style="position:absolute;left:908px;top:592px;width:88px;height:20px;overflow:hidden;"><div style="position:absolute;left:5px;top:3.30px;min-width:80.5px;text-align:right;font-size:13px;line-height:13px;letter-spacing:0.77px;color:#000;white-space:nowrap;">7,545,000,000</div></div>
<div style="position:absolute;left:998px;top:592px;width:88px;height:20px;overflow:hidden;"><div style="position:absolute;left:5px;top:3.30px;min-width:80.5px;text-align:right;font-size:13px;line-height:13px;letter-spacing:0.77px;color:#000;white-space:nowrap;">8,301,500,000</div></div>
<div style="position:absolute;left:1178px;top:592px;width:88px;height:20px;overflow:hidden;"><div style="position:absolute;left:5px;top:3.30px;min-width:80.5px;text-align:right;font-size:13px;line-height:13px;letter-spacing:0.77px;color:#000;white-space:nowrap;">7,545,000,000</div></div>
<div style="position:absolute;left:1268px;top:592px;width:37px;height:20px;overflow:hidden;"><div style="position:absolute;left:5px;top:3.30px;min-width:80.5px;text-align:right;font-size:13px;line-height:13px;letter-spacing:0.77px;color:#000;white-space:nowrap;">8,301,500,000</div></div>
<div style="position:absolute;top:634.72px;font-size:12.5px;line-height:12.5px;font-weight:400;color:#1a5f8a;white-space:nowrap;letter-spacing:0.991px;left:173.8px;">0112/HĐ/2017</div>
<div style="position:absolute;left:368px;top:631px;width:88px;height:20px;overflow:hidden;"><div style="position:absolute;left:5px;top:3.30px;min-width:80.5px;text-align:right;font-size:13px;line-height:13px;letter-spacing:0.77px;color:#000;white-space:nowrap;">389,290,000</div></div>
<div style="position:absolute;left:728px;top:631px;width:88px;height:20px;overflow:hidden;"><div style="position:absolute;left:5px;top:3.30px;min-width:80.5px;text-align:right;font-size:13px;line-height:13px;letter-spacing:0.77px;color:#000;white-space:nowrap;">0</div></div>
<div style="position:absolute;left:818px;top:631px;width:88px;height:20px;overflow:hidden;"><div style="position:absolute;left:5px;top:3.30px;min-width:80.5px;text-align:right;font-size:13px;line-height:13px;letter-spacing:0.77px;color:#000;white-space:nowrap;">0</div></div>
<div style="position:absolute;left:908px;top:631px;width:88px;height:20px;overflow:hidden;"><div style="position:absolute;left:5px;top:3.30px;min-width:80.5px;text-align:right;font-size:13px;line-height:13px;letter-spacing:0.77px;color:#000;white-space:nowrap;">622,400,000</div></div>
<div style="position:absolute;left:998px;top:631px;width:88px;height:20px;overflow:hidden;"><div style="position:absolute;left:5px;top:3.30px;min-width:80.5px;text-align:right;font-size:13px;line-height:13px;letter-spacing:0.77px;color:#000;white-space:nowrap;">295,350,000</div></div>
<div style="position:absolute;left:1178px;top:631px;width:88px;height:20px;overflow:hidden;"><div style="position:absolute;left:5px;top:3.30px;min-width:80.5px;text-align:right;font-size:13px;line-height:13px;letter-spacing:0.77px;color:#000;white-space:nowrap;">622,400,000</div></div>
<div style="position:absolute;left:1268px;top:631px;width:37px;height:20px;overflow:hidden;"><div style="position:absolute;left:5px;top:3.30px;min-width:80.5px;text-align:right;font-size:13px;line-height:13px;letter-spacing:0.77px;color:#000;white-space:nowrap;">295,350,000</div></div>
<div style="position:absolute;top:665.72px;font-size:12.5px;line-height:12.5px;font-weight:400;color:#1a5f8a;white-space:nowrap;letter-spacing:0.592px;left:173.8px;">08A/HĐ-NB/2017</div>
<div style="position:absolute;left:368px;top:662px;width:88px;height:20px;overflow:hidden;"><div style="position:absolute;left:5px;top:3.30px;min-width:80.5px;text-align:right;font-size:13px;line-height:13px;letter-spacing:0.77px;color:#000;white-space:nowrap;">320,100,000</div></div>
<div style="position:absolute;left:728px;top:662px;width:88px;height:20px;overflow:hidden;"><div style="position:absolute;left:5px;top:3.30px;min-width:80.5px;text-align:right;font-size:13px;line-height:13px;letter-spacing:0.77px;color:#000;white-space:nowrap;">0</div></div>
<div style="position:absolute;left:818px;top:662px;width:88px;height:20px;overflow:hidden;"><div style="position:absolute;left:5px;top:3.30px;min-width:80.5px;text-align:right;font-size:13px;line-height:13px;letter-spacing:0.77px;color:#000;white-space:nowrap;">0</div></div>
<div style="position:absolute;left:908px;top:662px;width:88px;height:20px;overflow:hidden;"><div style="position:absolute;left:5px;top:3.30px;min-width:80.5px;text-align:right;font-size:13px;line-height:13px;letter-spacing:0.77px;color:#000;white-space:nowrap;">507,000,000</div></div>
<div style="position:absolute;left:998px;top:662px;width:88px;height:20px;overflow:hidden;"><div style="position:absolute;left:5px;top:3.30px;min-width:80.5px;text-align:right;font-size:13px;line-height:13px;letter-spacing:0.77px;color:#000;white-space:nowrap;">237,600,000</div></div>
<div style="position:absolute;left:1178px;top:662px;width:88px;height:20px;overflow:hidden;"><div style="position:absolute;left:5px;top:3.30px;min-width:80.5px;text-align:right;font-size:13px;line-height:13px;letter-spacing:0.77px;color:#000;white-space:nowrap;">507,000,000</div></div>
<div style="position:absolute;left:1268px;top:662px;width:37px;height:20px;overflow:hidden;"><div style="position:absolute;left:5px;top:3.30px;min-width:80.5px;text-align:right;font-size:13px;line-height:13px;letter-spacing:0.77px;color:#000;white-space:nowrap;">237,600,000</div></div>
<div style="position:absolute;left:10px;top:700px;width:122px;height:20px;overflow:hidden;"><div style="position:absolute;right:32.00000000000001px;top:3.72px;font-size:12.5px;line-height:12.5px;letter-spacing:0.6px;word-spacing:0.6px;color:#1a5f8a;white-space:nowrap;">ây dựng dự án</div></div>
<div style="position:absolute;top:703.72px;font-size:12.5px;line-height:12.5px;font-weight:400;color:#1a5f8a;white-space:nowrap;letter-spacing:0.591px;left:173.8px;">43/HĐGK/2018</div>
<div style="position:absolute;left:368px;top:700px;width:88px;height:20px;overflow:hidden;"><div style="position:absolute;left:5px;top:3.30px;min-width:80.5px;text-align:right;font-size:13px;line-height:13px;letter-spacing:0.77px;color:#000;white-space:nowrap;">51,218,414</div></div>
<div style="position:absolute;left:728px;top:700px;width:88px;height:20px;overflow:hidden;"><div style="position:absolute;left:5px;top:3.30px;min-width:80.5px;text-align:right;font-size:13px;line-height:13px;letter-spacing:0.77px;color:#000;white-space:nowrap;">0</div></div>
<div style="position:absolute;left:818px;top:700px;width:88px;height:20px;overflow:hidden;"><div style="position:absolute;left:5px;top:3.30px;min-width:80.5px;text-align:right;font-size:13px;line-height:13px;letter-spacing:0.77px;color:#000;white-space:nowrap;">0</div></div>
<div style="position:absolute;left:908px;top:700px;width:88px;height:20px;overflow:hidden;"><div style="position:absolute;left:5px;top:3.30px;min-width:80.5px;text-align:right;font-size:13px;line-height:13px;letter-spacing:0.77px;color:#000;white-space:nowrap;">1,672,766</div></div>
<div style="position:absolute;left:1178px;top:700px;width:88px;height:20px;overflow:hidden;"><div style="position:absolute;left:5px;top:3.30px;min-width:80.5px;text-align:right;font-size:13px;line-height:13px;letter-spacing:0.77px;color:#000;white-space:nowrap;">1,672,766</div></div>
<div style="position:absolute;left:1305px;top:268px;width:16px;height:468px;background:#efefef;"></div>
<svg style="left:1309.8px;top:274.8px" width="7.4" height="4" viewBox="0 0 7.4 4"><path d="M0,4 L3.7,0 L7.4,4 Z" fill="#3c3c3c"/></svg>
<div style="position:absolute;left:1305px;top:644px;width:15px;height:74px;border:1px solid #979797;border-radius:2px;background:linear-gradient(90deg,#f6f6f6,#e9e9e9 45%,#d2d2d2 55%,#cfcfcf);"></div>
<div style="position:absolute;left:1309px;top:678px;width:7px;height:1px;background:#5a5a5a;"></div>
<div style="position:absolute;left:1309px;top:679px;width:7px;height:1px;background:#fbfbfb;"></div>
<div style="position:absolute;left:1309px;top:681px;width:7px;height:1px;background:#5a5a5a;"></div>
<div style="position:absolute;left:1309px;top:682px;width:7px;height:1px;background:#fbfbfb;"></div>
<div style="position:absolute;left:1309px;top:684px;width:7px;height:1px;background:#5a5a5a;"></div>
<div style="position:absolute;left:1309px;top:685px;width:7px;height:1px;background:#fbfbfb;"></div>
<svg style="left:1309.8px;top:725.8px" width="7.4" height="4" viewBox="0 0 7.4 4"><path d="M0,0 L3.7,4 L7.4,0 Z" fill="#3c3c3c"/></svg>
<div style="position:absolute;left:10px;top:736px;width:1311px;height:8px;background:linear-gradient(#f8f8f8,#ebebeb 2px,#e9e9e9);"></div>
<div style="position:absolute;left:241px;top:737px;width:693px;height:10px;border:1px solid #8e8e8e;border-radius:2px;background:linear-gradient(#f7f7f7,#ececec);"></div>
<svg style="left:17px;top:739.5px" width="4" height="8" viewBox="0 0 4 8"><path d="M4,0 L0,4.5 L4,9 Z" fill="#222"/></svg>
<svg style="left:1293.6px;top:739.5px" width="4" height="8" viewBox="0 0 4 8"><path d="M0,0 L4,4.5 L0,9 Z" fill="#222"/></svg>
<div style="position:absolute;left:583.5px;top:742px;width:1.3px;height:3px;background:#555;"></div>
<div style="position:absolute;left:586.3px;top:742px;width:1.3px;height:3px;background:#555;"></div>
<div style="position:absolute;left:589.1px;top:742px;width:1.3px;height:3px;background:#555;"></div>
<div style="position:absolute;left:1335px;top:0px;width:11px;height:744px;background:#eeeeee;"></div>
<svg style="left:1339.8px;top:7px" width="7.4" height="4" viewBox="0 0 7.4 4"><path d="M0,4 L3.7,0 L7.4,4 Z" fill="#3c3c3c"/></svg>
<div style="position:absolute;left:1335px;top:18px;width:17px;height:275px;border:1px solid #979797;border-bottom:none;border-radius:2px 2px 0 0;background:linear-gradient(90deg,#f3f3f3,#e6e6e6 6px,#d3d3d5 7px,#d0d0d2);"></div>
<div style="position:absolute;left:1339px;top:255px;width:8px;height:1px;background:#4a4a4a;"></div>
<div style="position:absolute;left:1339px;top:256px;width:8px;height:1px;background:#f8f8f8;"></div>
<div style="position:absolute;left:1339px;top:258px;width:8px;height:1px;background:#4a4a4a;"></div>
<div style="position:absolute;left:1339px;top:259px;width:8px;height:1px;background:#f8f8f8;"></div>
<div style="position:absolute;left:1339px;top:261px;width:8px;height:1px;background:#4a4a4a;"></div>
<div style="position:absolute;left:1339px;top:262px;width:8px;height:1px;background:#f8f8f8;"></div>
<div style="position:absolute;left:1335px;top:293px;width:17px;height:444px;border:1px solid #1f5f8f;border-top:none;border-radius:0 0 2px 2px;background:linear-gradient(90deg,#c6e9fc,#a6daf8 6px,#68c4ec 7px,#62c0ea);"></div>
<div style="position:absolute;left:1339px;top:491px;width:8px;height:1px;background:#143a5a;"></div>
<div style="position:absolute;left:1339px;top:492px;width:8px;height:1px;background:#c8ecfc;"></div>
<div style="position:absolute;left:1339px;top:494px;width:8px;height:1px;background:#143a5a;"></div>
<div style="position:absolute;left:1339px;top:495px;width:8px;height:1px;background:#c8ecfc;"></div>
<div style="position:absolute;left:1339px;top:497px;width:8px;height:1px;background:#143a5a;"></div>
<div style="position:absolute;left:1339px;top:498px;width:8px;height:1px;background:#c8ecfc;"></div>
<div style="position:absolute;left:1335px;top:738px;width:17px;height:10px;border:1px solid #979797;background:#eaeaea;"></div>
</div></body></html>
